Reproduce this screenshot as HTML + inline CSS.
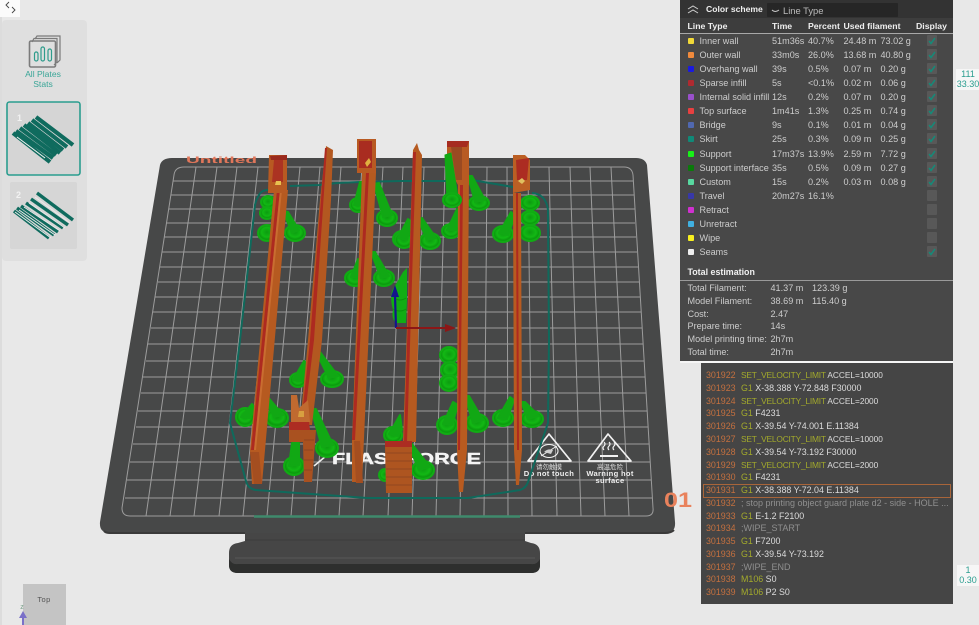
<!DOCTYPE html>
<html><head><meta charset="utf-8">
<style>
html,body{margin:0;padding:0;width:979px;height:625px;overflow:hidden;background:#e8e8e8;font-family:"Liberation Sans","Noto Sans CJK SC",sans-serif}
#s{position:absolute;left:0;top:0;filter:blur(.35px)}
.a{position:absolute;white-space:nowrap}
.h{position:absolute;white-space:nowrap;top:20.5px;color:#efefef;font-weight:700;font-size:8.7px}
#panel{position:absolute;left:680px;top:0;width:273px;height:361px;background:#484848;color:#cdcdcd;font-size:9.1px;filter:blur(.25px)}
.r span,.e span{position:absolute;white-space:nowrap;line-height:12px}
.r,.e{position:absolute;left:0;width:273px;height:12px}
.r i{position:absolute;left:8px;top:3px;width:6px;height:6px;border-radius:1px}
.r b{position:absolute;left:247px;top:0;width:10px;height:11px;background:#585858;border-radius:1px}
.r b svg{position:absolute;left:0;top:0}
#g{position:absolute;left:701px;top:363px;width:252px;height:241px;background:#454545;font-size:8.9px;color:#dcdcdc;filter:blur(.25px)}
.l{position:absolute;left:5px;height:12px;line-height:12px;white-space:nowrap}
.l u{text-decoration:none;color:#c4703f;display:inline-block;width:35px}
.l em{font-style:normal;color:#a3aa2c}
.l em.k{font-size:8.4px;letter-spacing:-.2px}
.l span{font-size:8.3px;margin-left:-1px}
.l s{text-decoration:none;color:#8f8f8f;font-size:9px}
</style></head>
<body>
<svg id="s" width="979" height="625" viewBox="0 0 979 625" xmlns="http://www.w3.org/2000/svg" font-family="Liberation Sans, Noto Sans CJK SC, sans-serif">
<rect width="979" height="625" fill="#e8e8e8"/>
<rect x="0" y="0" width="2" height="625" fill="#dcdcdc"/>
<!-- handle -->
<path d="M238,543 Q229,544 229,553 L229,565 Q229,573 238,573 L531,573 Q540,573 540,565 L540,553 Q540,544 531,543 L525,541 L525,530 L245,530 L245,541Z" fill="#464646"/>
<path d="M229,559 Q232,565 238,564 L531,564 Q537,565 540,559 L540,565 Q540,573 531,573 L238,573 Q229,573 229,565Z" fill="#2e2f2e"/>
<path d="M235,558 H535" stroke="#585858" stroke-width="1"/>
<path d="M245,540 H525" stroke="#414141" stroke-width="2"/>
<!-- plate -->
<path d="M172,158 L636,158 Q645,158 647,165 L675,522 Q676,533 665,533 L110,533 Q99,533 100,522 L160,165 Q162,158 172,158Z" fill="#474848"/>
<path d="M104,531 Q106,533 110,533 L245,533 M525,533 L665,533 Q671,533 674,530" fill="none" stroke="#3a3a3a" stroke-width="2"/>
<!-- grid -->
<g fill="none" stroke="#9c9c9c" stroke-width="1">
<path d="M122,508 L174,175 Q175,167 184,167 L624,167 Q632,167 633,175 L653,508 Q654,516 646,516 L130,516 Q122,516 122,508Z"/>
<path d="M196,167L146,516M217,167L170,516M237,167L194,516M258,167L219,516M279,167L243,516M300,167L267,516M320,167L291,516M341,167L315,516M362,167L339,516M383,167L363,516M403,167L388,516M424,167L412,516M445,167L436,516M466,167L460,516M487,167L484,516M507,167L508,516M528,167L532,516M549,167L557,516M570,167L581,516M590,167L605,516M611,167L629,516"/>
<path d="M173,181H633M171,195H634M169,209H635M166,223H635M164,237H636M162,252H637M160,267H638M158,282H639M155,297H640M153,312H641M151,328H642M148,344H643M146,361H644M143,377H645M141,393H646M138,411H647M136,427H648M133,444H649M130,462H650M127,480H651M125,498H652"/>
</g>
<path d="M254,516.5H520" stroke="#3f8a6c" stroke-width="2.5"/>
<!-- Untitled -->
<text transform="translate(186,163) scale(1,.72)" font-size="13" font-weight="700" fill="#e0765a" textLength="71" lengthAdjust="spacingAndGlyphs">Untitled</text>
<!-- logo -->
<path d="M314,466 L326,456" stroke="#eee" stroke-width="1.6"/>
<text x="332" y="464" font-size="15.5" font-weight="700" fill="#f4f4f4" stroke="#f4f4f4" stroke-width=".4" textLength="149" lengthAdjust="spacingAndGlyphs">FLASHFORGE</text>
<!-- warnings -->
<g fill="none" stroke="#f2f2f2" stroke-width="1.7" stroke-linejoin="round">
<path d="M549,434 L571,461 L528,461Z"/>
<path d="M608,434 L631,461 L588,461Z"/>
<ellipse cx="549" cy="451" rx="9" ry="6.5" stroke-width="1.1"/>
<path d="M541,456L557,446" stroke-width="1"/>
<path d="M604,442q2,2 0,4t0,4M609,442q2,2 0,4t0,4M614,442q2,2 0,4t0,4" stroke-width="1.2"/>
<path d="M600,456H618" stroke-width="2"/>
</g>
<path d="M544,452q4,-4 9,-2l-2,4z" fill="#cfcfcf"/>
<g fill="#eeeeee" text-anchor="middle">
<text x="549" y="469" font-size="6.5" opacity=".9">请勿触摸</text>
<text x="549" y="476" font-size="7.6" font-weight="700" letter-spacing=".3">Do not touch</text>
<text x="610" y="469" font-size="6.5" opacity=".9">高温危险</text>
<text x="610" y="476" font-size="7.6" font-weight="700" letter-spacing=".3">Warning hot</text>
<text x="610" y="483" font-size="7.6" font-weight="700" letter-spacing=".3">surface</text>
</g>
<!-- skirt -->
<path d="M272,190 Q262,189 259,195 Q256,200 255,205 L240,340 L230,423 L246,481 Q248,489 256,490 L367,498 L468,498 L520,490 Q526,488 528,482 L548,423 L549,340 L548,210 Q546,194 532,193 M513,187 L472,180 L447,181 L400,181 L360,182 L337,183 L320,185 L290,186" fill="none" stroke="#0f6a5c" stroke-width="2"/>

<!-- supports -->
<defs>
<radialGradient id="gr" cx=".5" cy=".45" r=".55"><stop offset="0" stop-color="#0c9c10"/><stop offset=".55" stop-color="#12b814"/><stop offset=".8" stop-color="#0b9a0e"/><stop offset="1" stop-color="#12b012"/></radialGradient>
</defs>
<g fill="url(#gr)" stroke="#11ac14" stroke-width="2">
<ellipse cx="268" cy="202" rx="7" ry="6"/><ellipse cx="267" cy="213" rx="7" ry="6"/><ellipse cx="267" cy="233" rx="9" ry="8"/><ellipse cx="295" cy="233" rx="10" ry="8"/>
<ellipse cx="358" cy="205" rx="8" ry="7"/><ellipse cx="387" cy="218" rx="10" ry="8"/><ellipse cx="402" cy="239" rx="9" ry="8"/><ellipse cx="355" cy="278" rx="10" ry="8"/><ellipse cx="384" cy="278" rx="10" ry="8"/>
<ellipse cx="452" cy="200" rx="9" ry="7"/><ellipse cx="479" cy="203" rx="10" ry="7"/><ellipse cx="451" cy="231" rx="9" ry="7"/><ellipse cx="430" cy="241" rx="10" ry="8"/><ellipse cx="404" cy="240" rx="9" ry="8"/>
<ellipse cx="530" cy="203" rx="9" ry="7"/><ellipse cx="530" cy="218" rx="9" ry="7"/><ellipse cx="530" cy="233" rx="10" ry="8"/><ellipse cx="503" cy="234" rx="10" ry="8"/>
<ellipse cx="245" cy="417" rx="9" ry="9"/><ellipse cx="277" cy="418" rx="11" ry="9"/><ellipse cx="298" cy="380" rx="8" ry="7"/><ellipse cx="332" cy="379" rx="11" ry="8"/>
<ellipse cx="294" cy="466" rx="10" ry="9"/><ellipse cx="327" cy="448" rx="11" ry="9"/><ellipse cx="449" cy="355" rx="9" ry="8"/><ellipse cx="450" cy="370" rx="9" ry="8"/><ellipse cx="449" cy="383" rx="9" ry="8"/>
<ellipse cx="447" cy="425" rx="10" ry="9"/><ellipse cx="393" cy="435" rx="9" ry="8"/><ellipse cx="423" cy="470" rx="11" ry="9"/><ellipse cx="385" cy="475" rx="6" ry="6"/>
<ellipse cx="477" cy="423" rx="11" ry="9"/><ellipse cx="503" cy="418" rx="10" ry="8"/><ellipse cx="532" cy="419" rx="11" ry="8"/>
</g>
<g fill="#11a814" stroke="#11a814" stroke-width="2" stroke-linejoin="round">
<path d="M292,233 L283,211 L288,212 L299,230Z"/>
<path d="M354,205 L360,182 L366,182 L363,205Z"/>
<path d="M383,217 L374,184 L379,183 L392,215Z"/>
<path d="M398,238 L408,219 L412,222 L407,240Z"/>
<path d="M351,277 L358,259 L363,261 L360,278Z"/>
<path d="M381,278 L371,252 L375,252 L389,276Z"/>
<path d="M475,202 L468,176 L472,176 L485,200Z"/>
<path d="M447,230 L457,209 L462,212 L456,230Z"/>
<path d="M427,240 L418,219 L422,218 L436,238Z"/>
<path d="M499,233 L511,212 L515,216 L508,235Z"/>
<path d="M241,417 L252,404 L255,408 L250,418Z"/>
<path d="M274,417 L263,396 L267,396 L283,415Z"/>
<path d="M293,380 L304,361 L308,364 L303,381Z"/>
<path d="M329,378 L316,352 L320,352 L338,376Z"/>
<path d="M289,466 L292,443 L299,443 L299,465Z"/>
<path d="M322,447 L311,409 L316,409 L333,445Z"/>
<path d="M443,424 L453,402 L458,405 L452,425Z"/>
<path d="M389,434 L400,415 L402,430 L398,436Z"/>
<path d="M419,470 L408,444 L412,444 L430,467Z"/>
<path d="M473,423 L465,396 L469,396 L483,420Z"/>
<path d="M498,418 L510,397 L514,400 L507,419Z"/>
<path d="M528,419 L521,402 L525,402 L539,416Z"/>
</g>
<!-- strips -->
<g>
<!-- 1 -->
<path d="M274,190 L288,190 L262,484 L252,484 L250,450Z" fill="#b65a20"/>
<path d="M277,190 L280,190 L254,450 L251,450Z" fill="#ad2a20"/>
<path d="M280,190 L282,190 L256,450 L254,450Z" fill="#c96d30"/>
<path d="M250,452 L259,452 L262,484 L254,484Z" fill="#a44e20"/>
<path d="M269,155 L287,155 L287,193 L268,193Z" fill="#b85a22"/>
<path d="M270,156 L287,155 L287,160 L271,160Z" fill="#9a2a1e"/>
<path d="M274,160 L283,160 L283,182 L272,182Z" fill="#ab3322"/>
<path d="M276,181 h5 v4 h-6z" fill="#e8c050"/>
<!-- 2 -->
<path d="M326,146 L333,150 L331,200 L322,340 L312,425 L300,425 L308,340 L320,200Z" fill="#b35820"/>
<path d="M325,148 L327,148 L314,340 L305,415 L302,415 L310,340Z" fill="#ad2a20"/>
<path d="M291,395 L297,395 L299,408 L308,400 L310,422 L291,422Z" fill="#c06a30"/>
<path d="M289,422 L309,422 L310,430 L289,430Z" fill="#ad2c22"/>
<path d="M289,430 L316,430 L312,482 L304,482 L303,442 L289,442Z" fill="#a95120"/>
<path d="M299,411 h5 v6 h-6z" fill="#d8a040"/>
<path d="M304,440 L314,440M304,450 L313,450M304,460 L313,460M304,470 L312,470" stroke="#8f4420" stroke-width="1"/>
<!-- 3 -->
<path d="M362,173 L376,173 L362,482 L352,482 L352,440Z" fill="#b65a20"/>
<path d="M366,173 L369,173 L355,440 L352,440Z" fill="#ad2a20"/>
<path d="M357,139 L376,139 L376,173 L357,173Z" fill="#b85a22"/>
<path d="M359,141 L372,141 L372,168 L359,168Z" fill="#a92c20"/>
<path d="M365,163 l4,-5 l2,4 l-4,5z" fill="#e0b040"/>
<path d="M356,483 L363,483 L360,441 L354,441Z" fill="#a44e20"/>
<!-- 4 -->
<path d="M413,150 L417,143 L419,150 L422,155 L416,442 L403,442Z" fill="#b65a20"/>
<path d="M413,152 L416,152 L407,442 L404,442Z" fill="#ad2a20"/>
<path d="M385,445 L412,445 L412,493 L386,493Z" fill="#ae5520"/>
<path d="M385,441 L412,441 L412,447 L385,447Z" fill="#ac2c22"/>
<path d="M386,453H412M386,461H412M386,469H412M386,477H412M386,485H412" stroke="#914720" stroke-width="1"/>
<!-- 5 -->
<path d="M458,185 L469,170 L467,450 L463,492 L459,492 L457,450Z" fill="#b85b20"/>
<path d="M460,185 L463,185 L460,450 L458,450Z" fill="#ad2a20"/>
<path d="M447,141 L469,141 L469,185 L458,185 L447,165Z" fill="#b85a22"/>
<path d="M447,141 L469,141 L467,147 L447,147Z" fill="#a62c20"/>
<path d="M451,147 L462,147 L462,180 L456,180 Z" fill="#9a4a22"/>
<!-- 6 -->
<path d="M513,193 L521,193 L522,450 L519,485 L516,485 L514,450Z" fill="#b85b20"/>
<path d="M516,193 L518,193 L519,450 L517,450Z" fill="#ad2a20"/>
<path d="M513,155 L525,155 L530,160 L530,190 L513,193Z" fill="#bb5f24"/>
<path d="M516,160 L529,158 L527,180 L517,180Z" fill="#ac2c22"/>
<path d="M518,181 l4,-3 l3,3 l-3,3z" fill="#e0c060"/>
</g>
<path d="M447,200 L445,155 L451,153 L458,197Z" fill="#11a814" stroke="#11a814" stroke-width="1"/>
<ellipse cx="452" cy="200" rx="9" ry="7" fill="url(#gr)" stroke="#11ac14" stroke-width="2"/>
<!-- central support cluster, drawn above the strips so it stays visible -->
<path d="M392,291 Q396,284 403,272 L407,268 L407,300 L406,323 L396,323 Q391,318 393,310 Q390,300 392,291Z" fill="#11ac14"/>
<path d="M394,298 Q400,302 406,298 M393,309 Q400,313 406,309" fill="none" stroke="#0b920e" stroke-width="1"/>
<!-- axes -->
<path d="M396,328 L395,296" stroke="#14148c" stroke-width="2.2"/>
<path d="M395,285 L399,297 L391,297Z" fill="#14148c"/>
<path d="M396,328 H446" stroke="#8c1616" stroke-width="2"/>
<path d="M456,328 L445,324 L445,332Z" fill="#8c1616"/>
<!-- 01 -->
<text x="664" y="507" font-size="21" font-weight="700" fill="#e9825c" textLength="28" lengthAdjust="spacingAndGlyphs">01</text>

<!-- sidebar -->
<rect x="2" y="20" width="85" height="241" rx="4" fill="#dfdfdf"/>
<rect x="0" y="0" width="20" height="17" fill="#fbfbfb"/>
<path d="M9,2 L6,5 L9,8 M12,7 L15,10 L12,13" fill="none" stroke="#444" stroke-width=".9"/>
<g fill="none" stroke="#7b7b7b" stroke-width="1.2">
<path d="M35,39 L37,36 H60 V60 L57,63"/><path d="M32,42 L34,38.5 H57 V62 L54,65"/>
<rect x="29.5" y="41" width="26" height="26" rx="1.5" stroke-width="1.6"/>
</g>
<g fill="none" stroke="#2f9c8c" stroke-width="1.2"><rect x="34.5" y="52" width="3.5" height="9" rx="1.7"/><rect x="41" y="47" width="3.5" height="14" rx="1.7"/><rect x="48" y="49" width="3.5" height="12" rx="1.7"/></g>
<g fill="#3aa597" font-size="8.6" text-anchor="middle"><text x="43" y="77">All Plates</text><text x="43" y="87">Stats</text></g>
<rect x="7" y="102" width="73" height="73" rx="2.5" fill="#d5d5d5" stroke="#2a9d8f" stroke-width="1.6"/>
<rect x="10" y="182" width="67" height="67" rx="2" fill="#d6d6d6"/>
<text x="17" y="121" font-size="9" font-weight="700" fill="#f2f2f2">1</text>
<text x="16" y="198" font-size="9" font-weight="700" fill="#f2f2f2">2</text>
<g stroke="#0f6b5e" stroke-width="4.2">
<path d="M36,117 L73,145M32,120 L67,147M28,123 L63,150M24,125 L60,153M20,128 L56,155M16,131 L53,158M13,133 L50,162"/>
</g>
<path d="M17,137 L45,158" stroke="#f2f2f2" stroke-width="1"/>
<path d="M37,193 L73,220M31,199 L68,225M26,203 L63,228M21,206 L58,232M17,208 L54,235M14,211 L49,238" stroke="#0f6b5e" stroke-width="3.4"/>
<path d="M35,197 L70,223M29,203 L65,228M24,207 L60,231M19,210 L55,235M15,212 L51,238" stroke="#eaeaea" stroke-width="1"/>
<!-- top cube -->
<rect x="23" y="584" width="43" height="41" fill="#c4c4c4"/>
<text x="44" y="602" font-size="7.5" fill="#555" text-anchor="middle" letter-spacing=".4">Top</text>
<text x="22" y="609" font-size="7" fill="#7aa08a" text-anchor="middle">z</text>
<path d="M23,611 L27,618 L24,618 L24,625 L22,625 L22,618 L19,618Z" fill="#7a70c8"/>
<!-- right tags -->
<rect x="956" y="69" width="23" height="21" fill="#f6f6f6"/>
<rect x="957" y="565" width="22" height="21" fill="#f6f6f6"/>
<g fill="#2a9d8f" font-size="9" text-anchor="middle">
<text x="968" y="77">111</text><text x="968" y="87">33.30</text>
<text x="968" y="573">1</text><text x="968" y="583">0.30</text>
</g>
</svg>

<div id="panel">
<div class="a" style="left:0;top:0;width:273px;height:18px;background:#333"></div>
<svg class="a" style="left:6px;top:4px" width="14" height="10"><path d="M2,5 L7,2 L12,5 M2,9 L7,6 L12,9" fill="none" stroke="#cfcfcf" stroke-width="1"/></svg>
<div class="a" style="left:26px;top:3.5px;color:#eee;font-weight:700;font-size:8.6px">Color scheme</div>
<div class="a" style="left:87px;top:3px;width:131px;height:14px;background:#262626;border-radius:1px"></div>
<svg class="a" style="left:91px;top:9px" width="10" height="5"><path d="M1,1 Q4,4 8,1" fill="none" stroke="#ccc" stroke-width="1"/></svg>
<div class="a" style="left:103px;top:5px;color:#bbb;font-size:9.4px">Line Type</div>
<div class="a" style="left:0;top:18px;width:273px;height:15px;background:#3d3d3d"></div>
<div class="a" style="left:0;top:32.5px;width:273px;height:1px;background:#a8a8a8"></div>
<div class="h" style="left:7.5px">Line Type</div>
<div class="h" style="left:92px">Time</div>
<div class="h" style="left:128px">Percent</div>
<div class="h" style="left:163.5px">Used filament</div>
<div class="h" style="left:236px">Display</div>

<div class="r" style="top:35px"><i style="background:#f0d838"></i><span style="left:19.5px">Inner wall</span><span style="left:92px">51m36s</span><span style="left:128px">40.7%</span><span style="left:163.5px">24.48 m</span><span style="left:200.5px">73.02 g</span><b><svg width="10" height="11"><path d="M2,6 L4,8.5 L8,3" fill="none" stroke="#158a78" stroke-width="1.5"/></svg></b></div>
<div class="r" style="top:49px"><i style="background:#f08a3c"></i><span style="left:19.5px">Outer wall</span><span style="left:92px">33m0s</span><span style="left:128px">26.0%</span><span style="left:163.5px">13.68 m</span><span style="left:200.5px">40.80 g</span><b><svg width="10" height="11"><path d="M2,6 L4,8.5 L8,3" fill="none" stroke="#158a78" stroke-width="1.5"/></svg></b></div>
<div class="r" style="top:63px"><i style="background:#1a1ae0"></i><span style="left:19.5px">Overhang wall</span><span style="left:92px">39s</span><span style="left:128px">0.5%</span><span style="left:163.5px">0.07 m</span><span style="left:200.5px">0.20 g</span><b><svg width="10" height="11"><path d="M2,6 L4,8.5 L8,3" fill="none" stroke="#158a78" stroke-width="1.5"/></svg></b></div>
<div class="r" style="top:77px"><i style="background:#b02a30"></i><span style="left:19.5px">Sparse infill</span><span style="left:92px">5s</span><span style="left:128px">&lt;0.1%</span><span style="left:163.5px">0.02 m</span><span style="left:200.5px">0.06 g</span><b><svg width="10" height="11"><path d="M2,6 L4,8.5 L8,3" fill="none" stroke="#158a78" stroke-width="1.5"/></svg></b></div>
<div class="r" style="top:91px"><i style="background:#9a50cc"></i><span style="left:19.5px">Internal solid infill</span><span style="left:92px">12s</span><span style="left:128px">0.2%</span><span style="left:163.5px">0.07 m</span><span style="left:200.5px">0.20 g</span><b><svg width="10" height="11"><path d="M2,6 L4,8.5 L8,3" fill="none" stroke="#158a78" stroke-width="1.5"/></svg></b></div>
<div class="r" style="top:105px"><i style="background:#e84040"></i><span style="left:19.5px">Top surface</span><span style="left:92px">1m41s</span><span style="left:128px">1.3%</span><span style="left:163.5px">0.25 m</span><span style="left:200.5px">0.74 g</span><b><svg width="10" height="11"><path d="M2,6 L4,8.5 L8,3" fill="none" stroke="#158a78" stroke-width="1.5"/></svg></b></div>
<div class="r" style="top:119px"><i style="background:#5068b0"></i><span style="left:19.5px">Bridge</span><span style="left:92px">9s</span><span style="left:128px">0.1%</span><span style="left:163.5px">0.01 m</span><span style="left:200.5px">0.04 g</span><b><svg width="10" height="11"><path d="M2,6 L4,8.5 L8,3" fill="none" stroke="#158a78" stroke-width="1.5"/></svg></b></div>
<div class="r" style="top:133px"><i style="background:#108a78"></i><span style="left:19.5px">Skirt</span><span style="left:92px">25s</span><span style="left:128px">0.3%</span><span style="left:163.5px">0.09 m</span><span style="left:200.5px">0.25 g</span><b><svg width="10" height="11"><path d="M2,6 L4,8.5 L8,3" fill="none" stroke="#158a78" stroke-width="1.5"/></svg></b></div>
<div class="r" style="top:148px"><i style="background:#18f018"></i><span style="left:19.5px">Support</span><span style="left:92px">17m37s</span><span style="left:128px">13.9%</span><span style="left:163.5px">2.59 m</span><span style="left:200.5px">7.72 g</span><b><svg width="10" height="11"><path d="M2,6 L4,8.5 L8,3" fill="none" stroke="#158a78" stroke-width="1.5"/></svg></b></div>
<div class="r" style="top:162px"><i style="background:#0a7a0a"></i><span style="left:19.5px">Support interface</span><span style="left:92px">35s</span><span style="left:128px">0.5%</span><span style="left:163.5px">0.09 m</span><span style="left:200.5px">0.27 g</span><b><svg width="10" height="11"><path d="M2,6 L4,8.5 L8,3" fill="none" stroke="#158a78" stroke-width="1.5"/></svg></b></div>
<div class="r" style="top:176px"><i style="background:#58d8a0"></i><span style="left:19.5px">Custom</span><span style="left:92px">15s</span><span style="left:128px">0.2%</span><span style="left:163.5px">0.03 m</span><span style="left:200.5px">0.08 g</span><b><svg width="10" height="11"><path d="M2,6 L4,8.5 L8,3" fill="none" stroke="#158a78" stroke-width="1.5"/></svg></b></div>
<div class="r" style="top:190px"><i style="background:#3838a8"></i><span style="left:19.5px">Travel</span><span style="left:92px">20m27s</span><span style="left:128px">16.1%</span><b></b></div>
<div class="r" style="top:204px"><i style="background:#d030d0"></i><span style="left:19.5px">Retract</span><b></b></div>
<div class="r" style="top:218px"><i style="background:#40b0e0"></i><span style="left:19.5px">Unretract</span><b></b></div>
<div class="r" style="top:232px"><i style="background:#f8f020"></i><span style="left:19.5px">Wipe</span><b></b></div>
<div class="r" style="top:246px"><i style="background:#eeeeee"></i><span style="left:19.5px">Seams</span><b><svg width="10" height="11"><path d="M2,6 L4,8.5 L8,3" fill="none" stroke="#158a78" stroke-width="1.5"/></svg></b></div>

<div class="a" style="left:7.5px;top:267px;color:#f0f0f0;font-weight:700;font-size:8.9px">Total estimation</div>
<div class="a" style="left:0;top:279.5px;width:273px;height:1.2px;background:#9a9a9a"></div>
<div class="e" style="top:282px"><span style="left:7.5px">Total Filament:</span><span style="left:90.5px">41.37 m</span><span style="left:132px">123.39 g</span></div>
<div class="e" style="top:294.5px"><span style="left:7.5px">Model Filament:</span><span style="left:90.5px">38.69 m</span><span style="left:132px">115.40 g</span></div>
<div class="e" style="top:307.5px"><span style="left:7.5px">Cost:</span><span style="left:90.5px">2.47</span></div>
<div class="e" style="top:320px"><span style="left:7.5px">Prepare time:</span><span style="left:90.5px">14s</span></div>
<div class="e" style="top:333px"><span style="left:7.5px">Model printing time:</span><span style="left:90.5px">2h7m</span></div>
<div class="e" style="top:345.5px"><span style="left:7.5px">Total time:</span><span style="left:90.5px">2h7m</span></div>
</div>
<div class="a" style="left:680px;top:361px;width:273px;height:1.5px;background:#f6f6f6"></div>
<div class="a" style="left:701px;top:362.5px;width:252px;height:1.5px;background:#2e2e2e"></div>

<div id="g">
<div class="a" style="left:2px;top:121px;width:246px;height:12px;border:1px solid #a8653a"></div>
<div class="l" style="top:6px"><u>301922</u><em class="k">SET_VELOCITY_LIMIT</em> <span>ACCEL=10000</span></div>
<div class="l" style="top:19px"><u>301923</u><em>G1</em> X-38.388 Y-72.848 F30000</div>
<div class="l" style="top:32px"><u>301924</u><em class="k">SET_VELOCITY_LIMIT</em> <span>ACCEL=2000</span></div>
<div class="l" style="top:44px"><u>301925</u><em>G1</em> F4231</div>
<div class="l" style="top:57px"><u>301926</u><em>G1</em> X-39.54 Y-74.001 E.11384</div>
<div class="l" style="top:70px"><u>301927</u><em class="k">SET_VELOCITY_LIMIT</em> <span>ACCEL=10000</span></div>
<div class="l" style="top:83px"><u>301928</u><em>G1</em> X-39.54 Y-73.192 F30000</div>
<div class="l" style="top:96px"><u>301929</u><em class="k">SET_VELOCITY_LIMIT</em> <span>ACCEL=2000</span></div>
<div class="l" style="top:108px"><u>301930</u><em>G1</em> F4231</div>
<div class="l" style="top:121px"><u>301931</u><em>G1</em> X-38.388 Y-72.04 E.11384</div>
<div class="l" style="top:134px"><u>301932</u><s>; stop printing object guard plate d2 - side - HOLE ...</s></div>
<div class="l" style="top:147px"><u>301933</u><em>G1</em> E-1.2 F2100</div>
<div class="l" style="top:159px"><u>301934</u><s>;WIPE_START</s></div>
<div class="l" style="top:172px"><u>301935</u><em>G1</em> F7200</div>
<div class="l" style="top:185px"><u>301936</u><em>G1</em> X-39.54 Y-73.192</div>
<div class="l" style="top:198px"><u>301937</u><s>;WIPE_END</s></div>
<div class="l" style="top:210px"><u>301938</u><em>M106</em> S0</div>
<div class="l" style="top:223px"><u>301939</u><em>M106</em> P2 S0</div>
</div>
</body></html>
